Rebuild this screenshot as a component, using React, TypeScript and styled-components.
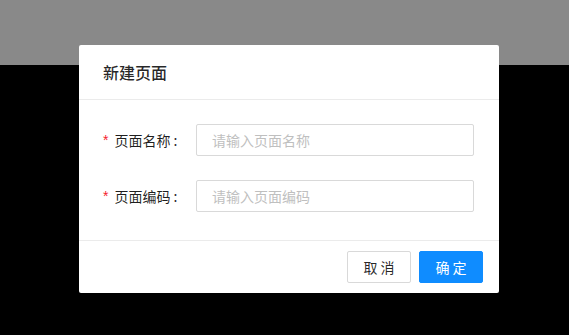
import React from "react";
import styled, { createGlobalStyle } from "styled-components";

const Global = createGlobalStyle`
  html, body { margin: 0; padding: 0; background: #000; }
  body { font-family: "Noto Sans CJK SC", "Noto Sans", sans-serif; }
  * { box-sizing: border-box; }
`;

const Page = styled.div`
  position: relative;
  width: 569px;
  height: 335px;
  background: #000;
  overflow: hidden;
`;

const TopBar = styled.div`
  height: 65px;
  background: #898989;
`;

const Overlay = styled.div`
  position: absolute;
  inset: 0;
  display: flex;
  align-items: flex-start;
  padding: 45px 0 0 79px;
`;

const Modal = styled.div`
  width: 420px;
  background: #fff;
  border-radius: 2px;
  display: flex;
  flex-direction: column;
`;

const Header = styled.div`
  height: 55px;
  padding: 0 24px 1px;
  display: flex;
  align-items: center;
  border-bottom: 1px solid #ebebeb;
  font-size: 16px;
  font-weight: 500;
  color: rgba(0, 0, 0, 0.85);
`;

const Body = styled.div`
  padding: 24px 24px 28px;
  display: flex;
  flex-direction: column;
  gap: 24px;
`;

const Row = styled.div`
  display: flex;
  align-items: center;
  height: 32px;
`;

const Label = styled.label`
  width: 93px;
  flex: none;
  font-size: 14px;
  color: rgba(0, 0, 0, 0.88);
  display: flex;
  align-items: center;
  white-space: nowrap;
`;

const Star = styled.span`
  color: #f5222d;
  margin-right: 6px;
  font-family: "Liberation Sans", sans-serif;
  font-size: 14px;
`;

const Colon = styled.span`
  margin-left: 3px;
`;

const Input = styled.input`
  width: 278px;
  height: 32px;
  border: 1px solid #d9d9d9;
  border-radius: 2px;
  padding: 0 15px;
  font-family: inherit;
  font-size: 14px;
  color: rgba(0, 0, 0, 0.85);
  outline: none;
  &::placeholder { color: #bfbfbf; }
`;

const Footer = styled.div`
  border-top: 1px solid #ebebeb;
  padding: 10px 16px;
  display: flex;
  justify-content: flex-end;
  gap: 8px;
`;

const Button = styled.button<{ $primary?: boolean }>`
  width: 64px;
  height: 32px;
  border-radius: 2px;
  font-family: inherit;
  font-size: 14px;
  cursor: pointer;
  border: 1px solid ${(p) => (p.$primary ? "#0f8cff" : "#d9d9d9")};
  background: ${(p) => (p.$primary ? "#0f8cff" : "#fff")};
  color: ${(p) => (p.$primary ? "#fff" : "rgba(0,0,0,0.85)")};
`;

const fields = [
  { label: "页面名称", placeholder: "请输入页面名称" },
  { label: "页面编码", placeholder: "请输入页面编码" },
];

export default function App() {
  return (
    <Page>
      <Global />
      <TopBar />
      <Overlay>
        <Modal>
          <Header>新建页面</Header>
          <Body>
            {fields.map((f) => (
              <Row key={f.label}>
                <Label>
                  <Star>*</Star>
                  {f.label}
                  <Colon>:</Colon>
                </Label>
                <Input placeholder={f.placeholder} />
              </Row>
            ))}
          </Body>
          <Footer>
            <Button>取 消</Button>
            <Button $primary>确 定</Button>
          </Footer>
        </Modal>
      </Overlay>
    </Page>
  );
}
